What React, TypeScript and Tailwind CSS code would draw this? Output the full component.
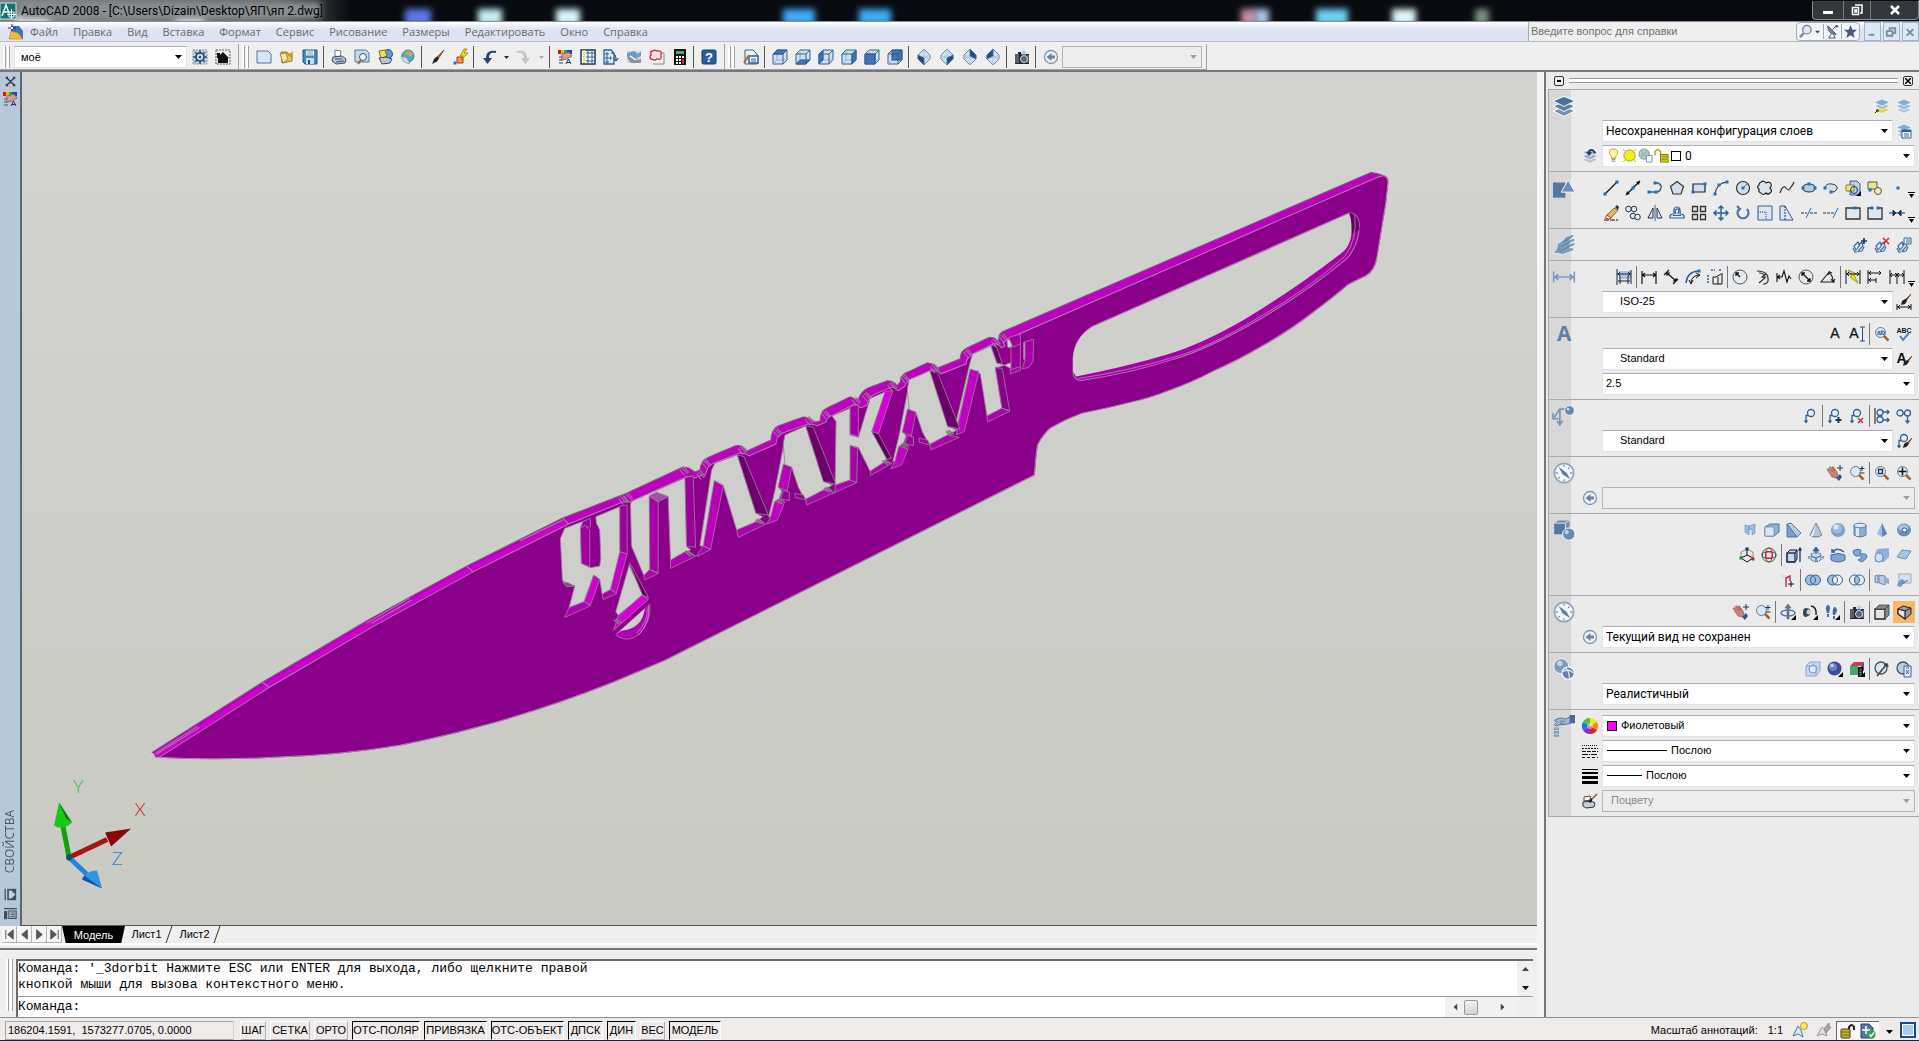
import React from "react";

// --- Types ---
interface ComboProps {
  label: string;
  value: string;
  className?: string;
  font?: string;
  disabled?: boolean;
  prefix?: React.ReactNode;
}

const ui = "font-['Open_Sans',sans-serif]";
const roboto = "font-['Roboto',sans-serif]";
const arial = "font-['Liberation_Sans',sans-serif]";

const N = "#17375e";
const B = "#2f6098";
const L = "#cfe0f1";
const K = "#111";

// --- Icons, all drawn on a 16x16 grid ---
const sq = (x: number, y: number, c = "#1f6fc0") => (
  <rect x={x - 1.5} y={y - 1.5} width="3" height="3" fill={c} />
);

const cubeFaces: Record<string, string> = {
  top: "1,5 5,1 15,1 11,5",
  bottom: "1,15 5,11 15,11 11,15",
  left: "1,5 5,1 5,11 1,15",
  right: "11,5 15,1 15,11 11,15",
  front: "1,5 11,5 11,15 1,15",
  back: "5,1 15,1 15,11 5,11",
};

const cube = (face: string) => (
  <g stroke={B} strokeLinejoin="round">
    <path d="M1 5 5 1h10v10l-4 4H1z" fill={L} />
    <path d="M5 1v10h10M5 11l-4 4" fill="none" stroke="#8fb0d2" />
    <polygon points={cubeFaces[face]} fill="#3f75b3" />
    <path d="M1 5h10v10M11 5l4-4" fill="none" />
  </g>
);

const isoFaces: Record<string, string> = {
  sw: "2,6 8,9 8,16 2,10",
  se: "14,6 8,9 8,16 14,10",
  ne: "8,0 14,6 14,10 8,7",
  nw: "8,0 2,6 2,10 8,7",
};

const iso = (face: string) => (
  <g stroke="#4d6f99" strokeWidth=".8" strokeLinejoin="round">
    <path d="M8 0l6 6v4l-6 6-6-6V6z" fill={L} />
    <path d="M2 6l6 3 6-3M8 9v7M2 10l6-3 6 3M8 0v7" fill="none" stroke="#a5bfdb" />
    <polygon points={isoFaces[face]} fill="#1f4c7e" />
  </g>
);

const glass = (
  <>
    <path d="m9.500 9.500 5 5" stroke="#a5622a" strokeWidth="2.500" />
    <circle cx="6.500" cy="6.500" r="5" fill="#dbe9f5" stroke="#66788c" />
  </>
);

const hand = (
  <>
    <path d="M0 4.500l1-1 5 3-4-4 1.500-.7L8 6 5 2h1.500L10 7l1 3-2 3-4-1z" fill="#c98274" stroke="#8d4c41" strokeWidth=".6" />
    <path d="m9 13 4-4 2 3-3 4z" fill="#33578b" />
    <path d="M13 0v6M10 3h6" stroke={N} />
  </>
);

const brush = (
  <>
    <path d="M15 1 8 8l1.500 1.500z" fill="#b9733c" stroke="#5a3417" strokeWidth=".7" />
    <path d="M8 7.500 5 10l-2 5 5-2.500L10 9.500z" fill="#222" />
  </>
);

const miniBrush = (
  <>
    <path d="m16 5-5 5 1 1z" stroke="#7a4b24" fill="#b9733c" />
    <path d="m11 9-3 2-1 4 4-1.500 2-3z" fill="#222" />
  </>
);

const layers = (a: string, b: string, c: string) => (
  <g stroke="#fff" strokeWidth=".7">
    <path d="m8 8.500 8 3-8 4-8-4z" fill={c} />
    <path d="m8 5 8 3-8 4-8-4z" fill={b} />
    <path d="m8 1 8 3.300-8 4-8-4z" fill={a} />
  </g>
);

const balloon = (x = 8, y = 5) => (
  <g fill="none" stroke={B} strokeWidth="1.300">
    <circle cx={x} cy={y} r="3.500" fill="#e8f1fa" />
    <path d={`M${x - 2.5} ${y + 2.5}h-2.500v7M${x - 6.5} ${y + 7.5}l1.500 2 1.500-2`} />
  </g>
);

const camera = (
  <>
    <path d="M1 5h3V3h3v2h8v10H1z" fill="#23272d" />
    <path d="M2 5v9M4 5v9M14 6v8" stroke="#8b96a3" />
    <circle cx="10" cy="10" r="3.500" fill="#51677f" stroke="#d5dde6" />
    <path d="M10 1v6M7 4h6M8 2l4 4M12 2 8 6" stroke="#8fc3ee" strokeWidth=".8" />
  </>
);

const chain = (
  <g fill="none" stroke="#3a6da8" strokeWidth="1.200">
    <path d="M2 9l4-4 2 3-4 5zM6 8l4-3 1 4-5 5M1 11l2 4 7-1 2-4" />
  </g>
);

const palette = (
  <>
    <path d="M1 1h4v4H1z" fill="#e01010" />
    <path d="M4 1h3v4H4z" fill="#f0c000" />
    <path d="M7 1h3v4H7z" fill="#10c040" />
    <path d="M10 1h5v4h-5z" fill="#2040f0" />
    <path d="M5 5 12 3l3 4-5 3-6 1z" fill="#d79d91" stroke="#824338" strokeWidth=".7" />
    <path d="M2 8h4M2 11h4M2 14h4" stroke="#68809a" strokeWidth="1.500" />
    <path d="m9 15 2.500-5 2.500 5M10 13.500h3" stroke={N} fill="none" />
  </>
);

const rings = (l: string, m: string, r: string) => (
  <g stroke={B}>
    <circle cx="5.500" cy="8" r="5" fill={l} />
    <circle cx="10.500" cy="8" r="5" fill={r} />
    <path d="M8 3.700a5 5 0 0 1 0 8.600 5 5 0 0 1 0-8.600z" fill={m} />
  </g>
);

const corner = <path d="M16 11v5h-5z" fill="#000" />;
const compass = (
  <>
    <circle cx="8" cy="8" r="7" fill="#f3f6f9" stroke="#8fa5be" strokeWidth="1.300" />
    <path d="M8 2v1.500M8 12.500V14M2 8h1.500M12.500 8H14M4 12l1-1M11 5l1-1" stroke="#7890ab" />
    <path d="M4 3.500 10 8l2.500 4.500L7 9z" fill="#5f7fa3" />
  </>
);

const icons: Record<string, React.ReactNode> = {
  cad: (
    <>
      <path d="M0 0h16v16H0z" fill="#17706b" stroke="#cfe8e6" />
      <path d="M2 13 6 2l3 8M4 9h4" stroke="#dff" strokeWidth="1.500" fill="none" />
      <path d="M9 9h5v5H9zM11.500 6v10M7 11.500h9" stroke="#fff" fill="none" />
    </>
  ),
  drawing: (
    <>
      <path d="M3 2h8l4 5v8H3z" fill="#3f73b5" />
      <path d="m1 15 2-8 7 2 5 6z" fill="#f3bd35" stroke="#b1801a" strokeWidth=".6" />
      <path d="M4 0v7M0 4h8" stroke={N} />
      <path d="M3 3h2v2H3z" fill="#fff" />
    </>
  ),
  gear: (
    <>
      <path d="M1 1h14v14H1z" fill="#c6d2df" stroke="#7e93aa" strokeDasharray="2 1" />
      <circle cx="8" cy="8" r="4" fill="#e8eef4" stroke="#324f70" strokeWidth="2" />
      <path d="M8 1v3M8 12v3M1 8h3M12 8h3M3 3l2 2M11 11l2 2M13 3l-2 2M3 13l2-2" stroke="#324f70" strokeWidth="1.500" />
      <circle cx="8" cy="8" r="1.500" fill="#324f70" />
    </>
  ),
  home: (
    <>
      <path d="M1 1h14v14H1z" fill="none" stroke="#555" strokeDasharray="2 1" />
      <path d="m8 3 6 6h-1v5H3V9H2V4h3v2z" fill="#111" />
    </>
  ),
  new: <path d="M1 2h11l3 3v9H1z" fill="#d5e6f5" stroke="#50779f" />,
  open: (
    <>
      <path d="M2 3h6l1 2h4v7L3 14z" fill="#e5c860" stroke="#8f7420" />
      <path d="m1 5 6-1 2 6-5 4z" fill="#f7e7a6" stroke="#8f7420" strokeWidth=".8" />
      <path d="m7 8 7-6-1 7-3-2z" fill="#c09b30" />
    </>
  ),
  save: (
    <>
      <path d="M1 1h14v14H3l-2-2z" fill="#4d83bf" stroke="#244f80" />
      <path d="M4 1.500h8v5H4z" fill="#e6f0fa" />
      <path d="M4 9h8v6H4z" fill="#c7dcf0" />
      <path d="M5 3h6M5 5h6" stroke="#7fa5cc" />
      <path d="M6 11h2v4H6z" fill="#244f80" />
    </>
  ),
  print: (
    <>
      <path d="m4 1 6 1-1 6-5-1z" fill="#fff" stroke="#4a6079" strokeWidth=".8" />
      <path d="m2 8 9-1 4 3-1 4-9 1-4-3z" fill="#b9c6d6" stroke="#34496a" />
      <path d="m4 10 7 0M5 13l8-1" stroke="#34496a" />
    </>
  ),
  preview: (
    <>
      <path d="M1 1h11l3 3v9H1z" fill="#c5dbf0" stroke="#50779f" />
      <circle cx="9" cy="8" r="3.500" fill="#f3f8fc" stroke="#3b5877" />
      <path d="m7 11-3 4" stroke="#a5622a" strokeWidth="2" />
    </>
  ),
  publish: (
    <>
      <circle cx="11" cy="5" r="4.500" fill="#5f97cf" stroke="#2b5585" />
      <path d="m2 2 6-1 2 6-6 3z" fill="#f5dc55" stroke="#806a14" />
      <path d="m2 9 7-1 6 2-2 4-8 1z" fill="#b9c6d6" stroke="#34496a" />
    </>
  ),
  web: (
    <>
      <circle cx="8" cy="7" r="6" fill="#58a2dd" stroke="#3573a8" />
      <path d="m8 1 6 4-5 3z" fill="#e8a14a" />
      <path d="m3 4 5-3v6z" fill="#7cc25b" />
      <path d="m1 7 6 2 3 6-6-2z" fill="#d8dde3" stroke="#77818d" strokeWidth=".6" />
    </>
  ),
  brush,
  match: (
    <>
      <path d="M5 8h6v6H5z" fill="#f19a5a" stroke="#a13d12" />
      <path d="m12 0-4 7h3l-2 4 7-7h-4l3-4z" fill="#ffd800" stroke="#8a6c00" strokeWidth=".7" />
      {sq(3, 14)}
    </>
  ),
  undo: <path d="M15 2C9 1 5 3 5 9H2l4.500 6L11 9H8c0-4 2-6 7-5z" fill="#23467c" />,
  redo: <path d="M1 2c6-1 10 1 10 7h3l-4.500 6L5 9h3c0-4-2-6-7-5z" fill="#c3c3c3" />,
  palette,
  design: (
    <>
      <path d="M1 1h14v14H1z" fill="#fff" stroke={N} strokeWidth="1.500" />
      <path d="M4 1v14" stroke="#e2c000" strokeWidth="2" strokeDasharray="1 1" />
      <path d="M7 3h2v2H7zM11 3h2v2h-2zM7 7h2v2H7zM11 7h2v2h-2zM7 11h2v2H7zM11 11h2v2h-2z" fill="none" stroke={B} />
    </>
  ),
  tools: (
    <>
      <path d="M1 1h7l3 3v11H1z" fill="#dce8f4" stroke={B} strokeWidth="1.300" />
      <path d="M3 4h2v2H3zM3 8h2v2H3zM3 12h2v2H3zM7 8h1v2H7z" fill="none" stroke={B} />
      <path d="M8 4c4 0 5 3 5 7m-2.500-2 2.500 3 2.500-3" stroke={N} fill="none" />
    </>
  ),
  sheet: (
    <>
      <path d="M1 2h14v12H1z" fill="#c8d9e8" />
      <path d="m1 4 7-2 4 3 3-3v5l-6 3-8-2z" fill="#6f9cc0" />
      <path d="m1 9 5-3 6 5 3-1v4H5z" fill="#8a949c" />
      <path d="m4 7 6 4" stroke="#fff" strokeWidth="1.500" />
    </>
  ),
  markup: (
    <>
      <path d="M4 4h11v11H4" fill="#f2f2f2" stroke="#888" />
      <path d="M4 2c2-2 3 0 4 0s3-1 4 1-1 2 0 4-1 4-3 3-2 2-4 1-4 0-4-3 2-1 1-3 0-3 2-3z" fill="#fbe4e4" stroke="#d8232f" strokeWidth="1.300" />
    </>
  ),
  calc: (
    <>
      <path d="M2 0h12v16H2z" fill="#151515" />
      <path d="M4 2h8v3H4z" fill="#4fa57a" />
      <path d="M4 7h2v2H4zM7 7h2v2H7zM10 7h2v2h-2zM4 10h2v2H4zM7 10h2v2H7zM4 13h2v2H4zM7 13h2v2H7z" fill="#fff" />
      <path d="M10 10h2v5h-2z" fill="#e32020" />
    </>
  ),
  help: (
    <>
      <rect x="1" y="1" width="14" height="14" rx="1.500" fill="#2a5f97" stroke="#173b66" />
      <text x="8" y="13" fontSize="13" fontWeight="700" fill="#fff" textAnchor="middle" fontFamily="Liberation Sans">?</text>
    </>
  ),
  views: (
    <>
      <path d="M2 1h8l4 4v10H2z" fill="#e8f0f8" stroke={B} />
      <path d="M6 7h9v7H6z" fill="#fff" stroke={B} strokeWidth="1.500" />
      <path d="M8 10h5M8 12h5" stroke={B} />
      <path d="m1 14 5-8" stroke="#b16b34" strokeWidth="2" />
    </>
  ),
  top: cube("top"),
  bottom: cube("bottom"),
  left: cube("left"),
  right: cube("right"),
  front: cube("front"),
  back: cube("back"),
  sw: iso("sw"),
  se: iso("se"),
  ne: iso("ne"),
  nw: iso("nw"),
  camera,
  prev: (
    <>
      <circle cx="8" cy="8" r="6.500" fill="#eef2f6" stroke="#7e93ac" strokeWidth="1.300" />
      <path d="m3.500 8 5-4v2.500h3.500v3H8.500V12z" fill="#6b84a2" />
    </>
  ),
  search: (
    <>
      <path d="m6 10-4 4" stroke="#7785a0" strokeWidth="2.500" />
      <circle cx="9.500" cy="6" r="4.500" fill="#dfe6f2" stroke="#6d7c98" strokeWidth="1.300" />
    </>
  ),
  comms: (
    <>
      <path d="M3 2c0 6 3 9 9 9z" fill="#7785a0" stroke="#46556f" />
      <path d="m8 6 4-4M7 10l-3 5h7l-2-4" stroke="#46556f" fill="none" />
      <circle cx="12.500" cy="2.500" r="1.500" fill="#46556f" />
    </>
  ),
  star: <path d="m8 1 2 5h5l-4 3.500 1.500 5.500L8 12l-4.500 3L5 9.500 1 6h5z" fill="#46597f" />,
  // panel headings
  hLayers: layers("#4d709b", "#5d7fa8", "#7391b5"),
  hDraw: (
    <>
      <path d="M0 4h9v11H0z" fill="#5578a3" />
      <path d="m11 2 5 9H6z" fill="#6c8fb9" stroke="#fff" strokeWidth=".7" />
    </>
  ),
  hChain: (
    <g fill="#7d9cbe" stroke="#fff" strokeWidth=".5">
      <path d="m0 14 3-4 0-3 4-2 2-3 6-2v2l-3 2 4-1v2l-4 2 4-1v2l-4 2 3 0v2l-8 3-4-1z" />
      <path d="m6 6 7-3M6 9l6-3M6 12l6-3M3 10l3 3" stroke="#4d6f97" />
    </g>
  ),
  hDim: <path d="M.5 4v8M15.500 4v8M1 8h14M4 6 1.500 8 4 10M12 6l2.500 2-2.500 2" stroke="#7d9cc2" strokeWidth="1.200" fill="none" />,
  hText: <text x="8" y="13" fontSize="15" fontWeight="700" fill="#5b7faa" textAnchor="middle" fontFamily="Open Sans">A</text>,
  hLeader: (
    <>
      <path d="M1 9 5 3h5M5 3v11M3 11.500l2 3 2-3M0 6v4h4" stroke="#7794b6" strokeWidth="1.200" fill="none" />
      <circle cx="12" cy="4" r="3.500" fill="#6586af" stroke="#fff" strokeWidth=".6" />
      <circle cx="11" cy="3" r="1" fill="#c9d8e8" />
    </>
  ),
  compass,
  hSolid: (
    <>
      <path d="m1 3 3-2h8v7l-3 3H1z" fill="#6b8cb4" />
      <path d="M1 3h8v8H1z" fill="#54779f" />
      <path d="M1 3h8l3-2M9 3v5" stroke="#e3eaf2" strokeWidth=".7" fill="none" />
      <circle cx="11.500" cy="11" r="4.500" fill="#6a8bb3" stroke="#fff" strokeWidth=".7" />
      <circle cx="10" cy="9.500" r="1.500" fill="#c4d3e4" />
    </>
  ),
  hVisual: (
    <>
      <circle cx="6" cy="6" r="5.500" fill="#7f9cbf" stroke="#fff" strokeWidth=".6" />
      <circle cx="5" cy="4" r="2" fill="#c4d3e4" />
      <circle cx="11" cy="11" r="4.500" fill="#5f81aa" stroke="#fff" strokeWidth=".8" />
      <path d="M7 10q4-3 8 1M9 7q3 3 3 8" stroke="#dbe5ef" fill="none" />
    </>
  ),
  hHand: (
    <>
      <path d="M1 4q4-3 8-1l4-2v5l-5 1H5L2 8 1 7l2-2z" fill="#a3b8cf" stroke="#56749a" strokeWidth=".7" />
      <path d="M5 4.500h4M5 6l3 0" stroke="#56749a" strokeWidth=".6" />
      <path d="M12 0h4v6l-4 0z" fill="#4b6a93" />
      <path d="M1 9.500h3v1H1zM1 12h3v1H1zM1 14.500h3v1H1z" fill="none" stroke="#7d96b2" strokeWidth=".8" />
    </>
  ),
  // layers
  layerPrev: (
    <>
      {layers("#8badd4", "#a3bedd", "#e8d21c")}
      <path d="m1 15 3-3M2 12h2v2" stroke={K} fill="none" />
    </>
  ),
  layerStates: layers("#8badd4", "#9db9d8", "#aec6e0"),
  layerMgr: (
    <>
      {layers("#8badd4", "#9db9d8", "#aec6e0")}
      <path d="M6 7h9v8H6z" fill="#fff" stroke={B} />
      <path d="M6 7h9v2H6z" fill={B} />
      <path d="M8 11h5M8 13h5" stroke={B} />
    </>
  ),
  layerBack: (
    <>
      {layers("#aab8c8", "#9fb0c4", "#b4c1d0")}
      <path d="M14 5C12 0 7 0 6 4H4l3 4 3-4H8c1-2 3-2 4 2z" fill="#1f3f70" />
    </>
  ),
  bulb: (
    <>
      <path d="M8 1c-6 0-5 6-2 8v2h4V9c3-2 4-8-2-8z" fill="#fdf6a8" stroke="#b59e18" />
      <path d="M6 12h4M6 14h4" stroke="#777" />
    </>
  ),
  sun: (
    <>
      <path d="M1 1l3 3M15 1l-3 3M1 15l3-3M15 15l-3-3" stroke="#c9b500" />
      <circle cx="8" cy="8" r="6" fill="#f4ec1c" stroke="#a59a10" />
    </>
  ),
  vpFreeze: (
    <>
      <circle cx="6.500" cy="6.500" r="5.500" fill="#b4c9c0" stroke="#7e94a5" />
      <path d="M3 3l7 7M10 3l-7 7" stroke="#90a8b0" />
      <path d="M9 8h6v7H9z" fill="#fff" stroke="#6d95bf" />
    </>
  ),
  lock: (
    <>
      <path d="M1 8V4q3-5 6 0v4" stroke="#b8a916" strokeWidth="1.600" fill="none" />
      <rect x="7" y="7" width="8" height="8" fill="#d8cc12" stroke="#7e7604" />
      <path d="M8 9.500h6M8 12h6" stroke="#8e8510" />
    </>
  ),
  // draw
  line: (<><path d="M2 14 14 2" stroke={K} strokeWidth="1.300" />{sq(2, 14)}{sq(14, 2)}</>),
  xline: (<><path d="M1 15 15 1" stroke={K} strokeWidth="1.200" /><path d="M1 15l1-4 3 3zM15 1l-4 1 3 3z" fill={K} />{sq(8, 8)}</>),
  pline: (<><path d="M1 12h8M8 3h3q4 2 3 5-1 4-5 4" stroke={B} strokeWidth="1.400" fill="none" />{sq(2, 12)}{sq(9, 12)}{sq(8, 3)}</>),
  polygon: <path d="m8 1.500 6.500 5L12 14H4L1.500 6.500z" fill="#d4dfeb" stroke="#333" strokeWidth="1.200" />,
  rect: (<><path d="M2 4h12v8H2z" fill="#d4dfeb" stroke="#222" strokeWidth="1.200" />{sq(2, 12)}{sq(14, 4)}</>),
  arc: (<><path d="M2 15Q3 3 14 2" stroke={K} fill="none" />{sq(2, 14)}{sq(6, 5)}{sq(14, 2)}</>),
  circle: (<><circle cx="8" cy="8" r="6.500" fill="#d4e0ec" stroke="#333" strokeWidth="1.200" /><path d="m8 8 4-4" stroke={B} />{sq(8, 8)}</>),
  cloud: <path d="M4 2q3-2 5 1 4-2 5 1 1 2-1 4 3 3 0 5-2 2-4 0-3 3-5 0-3-1-2-4Q-1 7 2 5q0-2 2-3z" fill="#dbe5ef" stroke="#222" strokeWidth="1.200" />,
  spline: <path d="M1 13q3-9 6-5t5-1q2-2 3-5" stroke="#333" strokeWidth="1.200" fill="none" />,
  ellipse: (<><ellipse cx="8" cy="8" rx="6.500" ry="4" fill="#b3cce4" stroke="#222" />{sq(2, 8)}{sq(14, 8)}{sq(8, 4)}</>),
  earc: (<><path d="M2 8q1-5 7-4 6 1 5 5-2 4-6 3" fill="#d4e0ec" stroke="#333" />{sq(2, 8)}{sq(8, 12)}</>),
  insert: (<><path d="M5 1h7l3 3v11H5z" fill="#b8cfe6" stroke={B} /><path d="M1 5h8v6H1z" fill="#ede58c" stroke="#8b8118" /><circle cx="9" cy="10" r="3.500" fill="none" stroke={N} />{corner}</>),
  block: (<><path d="M1 2h9v7H1z" fill="#ede58c" stroke="#555" /><circle cx="11" cy="11" r="3.500" fill="#f3eeb4" stroke="#555" />{sq(3, 10)}</>),
  point: sq(9, 8),
  erase: (<><path d="M1 15h14" stroke={K} strokeDasharray="5 1" /><path d="m4 10 7-7 4 2-7 8z" fill="#e4b36c" stroke="#8b6a30" /><path d="m4 10 4 3-2 1-4-1z" fill="#fff" stroke="#c33" /><path d="m12 2 2-2 2 2-1 3z" fill="#333" /></>),
  copy: (<g fill="#dbe7f3" stroke="#333"><circle cx="3.500" cy="4" r="2.800" /><circle cx="9" cy="4" r="2.800" /><circle cx="8" cy="11" r="2.800" /><circle cx="12.500" cy="12" r="2.800" /></g>),
  mirror: (<><path d="M6 3v10H1zM10 3v10h5z" fill="#dbe7f3" stroke="#333" /><path d="M8 0v16" stroke="#1f6fc0" /></>),
  offset: <path d="M1 13q-1-4 4-4Q4 2 8 2t3 7q5 0 4 4zM4 10.500h8M7 9q-2-4 1-5t1 5" fill="#e3edf7" stroke={B} strokeWidth="1.200" />,
  array: <path d="M1.500 1.500h5v5h-5zM9.500 1.500h5v5h-5zM1.500 9.500h5v5h-5zM9.500 9.500h5v5h-5z" fill="#dfe6ee" stroke="#333" strokeWidth="1.300" />,
  move: <path d="M8 1v14M1 8h14M5.500 3.500 8 1l2.500 2.500M5.500 12.500 8 15l2.500-2.500M3.500 5.500 1 8l2.500 2.500M12.500 5.500 15 8l-2.500 2.500" stroke={B} strokeWidth="1.500" fill="none" />,
  rotate: <path d="M12 4a5.500 5.500 0 1 1-8 0M2 1l3 3-3 3" stroke="#4877ac" strokeWidth="2.200" fill="none" />,
  scale: (<><path d="M1 1h14v14H1z" fill="#dbe7f3" stroke={B} /><path d="M1 7h8v8" stroke="#333" fill="none" strokeDasharray="1 1" /></>),
  stretch: (<><path d="M1 1h5l8 14H1z" fill="#dbe7f3" stroke="#33578b" /><path d="M6 1v14" stroke="#333" strokeDasharray="2 1" /></>),
  trim: (<><path d="M0 8h6M9 8h7" stroke="#333" strokeDasharray="3 1" /><path d="m5 13 5-10" stroke="#1f6fc0" /></>),
  extend: (<><path d="M0 8h11" stroke="#333" strokeDasharray="3 1" /><path d="m10 13 5-10" stroke="#1f6fc0" /></>),
  brk: (<><path d="M1 3h14v11H1z" fill="#dfe8f1" stroke="#333" strokeWidth="1.300" />{sq(10, 3)}</>),
  break2: (<><path d="M5 3H1v11h14V3h-4" fill="#dfe8f1" stroke="#333" strokeWidth="1.300" />{sq(5, 3)}{sq(11, 3)}</>),
  join: <path d="M0 8h16M4 5l3 3-3 3zM12 5 9 8l3 3z" fill={N} stroke={N} />,
  chainAdd: (<>{chain}<path d="M12 1v6M9 4h6" stroke={N} strokeWidth="1.700" /></>),
  chainDel: (<>{chain}<path d="m9 1 6 6M15 1 9 7" stroke="#e02020" strokeWidth="1.500" /></>),
  chainMgr: (<>{chain}<path d="M8 1h7v6H8z" fill="#fff" stroke={B} /><path d="M10 3h4M10 5h4" stroke={B} /></>),
  // dimension
  dimQuick: (<><path d="M3 2h12v8H3z" fill="#a9c4e2" /><path d="M1 0v16M15 1v14M4 7v8M12 7v8M1 5h14M2 12h12M4 3 2 5l2 2M12 3l2 2-2 2" stroke="#123" fill="none" /></>),
  dimLin: <path d="M1 2v13M15 2v13M1 6h14M4 4 1.500 6 4 8M12 4l2.500 2L12 8" stroke={K} strokeWidth="1.200" fill="none" />,
  dimAl: <path d="M4 4l9 8M1 6l5-5M10 15l5-5M4 7V4h3M13 9v3h-3" stroke={K} strokeWidth="1.200" fill="none" />,
  dimArc: (<><path d="M1 14Q2 3 13 2" stroke={B} strokeWidth="1.500" fill="none" /><path d="M6 14Q6 7 14 6M4 11l2 4 2-4M11 4l4 2-4 3" stroke={K} fill="none" />{sq(14, 2)}</>),
  dimOrd: (<><path d="M6 15V8h3l5-3M6 15h9M11 8v7M15 4v11" stroke={K} fill="none" /><path d="M1 6v9M4 1h4M12 1h3" stroke={B} strokeDasharray="2 1" strokeWidth="1.500" /></>),
  dimRad: (<><circle cx="8" cy="8" r="7" fill="#e6ebf0" stroke="#555" /><path d="m8 8-4-4m0 3V4h3" stroke={K} strokeWidth="1.300" fill="none" /></>),
  dimJog: <path d="M3 2q12 0 11 10-1 3-5 3M5 4q6 0 6 5M12 5 8 8l3 1-6 5" stroke="#333" strokeWidth="1.200" fill="none" />,
  dimJLine: <path d="M1 4v9M1 8h5l2-6 3 11 2-6 2 3M4 6 1.500 8 4 10" stroke={K} strokeWidth="1.100" fill="none" />,
  dimDia: (<><circle cx="8" cy="8" r="7" fill="#e6ebf0" stroke="#555" /><path d="m3.500 3.500 9 9M4 7V4h3M12 9v3H9" stroke={K} strokeWidth="1.300" fill="none" /></>),
  dimAng: <path d="M10 2 1 13h14M9 4q4 2 4 9M8 6l1-3 3 1M11 10l2 3 2-3" stroke="#222" strokeWidth="1.100" fill="none" />,
  dimFast: (<><path d="M3 1l9 4-3 1 4 8-8-6 2-1z" fill="#efe01a" stroke="#857a00" strokeWidth=".7" /><path d="M1 1v14M15 1v14M1 5h14M4 3 2 5l2 2M12 3l2 2-2 2" stroke={K} fill="none" /></>),
  dimBase: <path d="M1 1v14M1 4h13M1 11h8M9 9v5M4 2 2 4l2 2M12 2l2 2-2 2M4 9l-2 2 2 2" stroke={K} fill="none" />,
  dimCont: <path d="M1 1v14M8 4v11M15 1v14M1 6h14M3 4 1 6l2 2M13 4l2 2-2 2M6 4l2 2-2 2M10 4 8 6l2 2" stroke={K} fill="none" />,
  dimStyle: (<><path d="M1 10v6M15 10v6M1 13h14M4 11l-2 2 2 2M12 11l2 2-2 2" stroke={K} fill="none" /><path d="m15 0-6 6 1 1z" stroke="#7a4b24" /><path d="m9 5-3 2-1 4 4-1 2-3z" fill="#222" /></>),
  // text
  mtext: <text x="8" y="12" fontSize="14" fill="#111" stroke="#111" strokeWidth=".3" textAnchor="middle" fontFamily="Liberation Sans">A</text>,
  text: (<><text x="5" y="12" fontSize="14" fill="#111" stroke="#111" strokeWidth=".3" textAnchor="middle" fontFamily="Liberation Sans">A</text><path d="M11 1h5M13.500 1v14M11 15h5" stroke="#1f4f8b" /></>),
  find: (<>{glass}<text x="7" y="9" fontSize="7" fontWeight="700" fill={B} textAnchor="middle" fontFamily="Liberation Sans">ab</text></>),
  spell: (<><text x="8" y="7" fontSize="7" fontWeight="700" fill="#111" textAnchor="middle" fontFamily="Liberation Sans">ABC</text><path d="m4 10 3 4 6-7" stroke="#4a86c4" strokeWidth="2" fill="none" /></>),
  textStyle: (<><text x="5.500" y="12" fontSize="14" fontWeight="700" fill="#111" textAnchor="middle" fontFamily="Liberation Sans">A</text>{miniBrush}</>),
  // leaders
  ldr: balloon(9, 5),
  ldrAdd: (<>{balloon(8, 5)}<path d="M11.500 9v6M8.500 12h6" stroke={N} strokeWidth="2" /></>),
  ldrDel: (<>{balloon(8, 5)}<path d="m9 10 5 5M14 10l-5 5" stroke="#e02020" strokeWidth="1.400" /></>),
  ldrAlign: (<><path d="M1 0v16" stroke={K} /><g fill="none" stroke={B} strokeWidth="1.300"><circle cx="6" cy="4.500" r="3" /><circle cx="6" cy="11.500" r="3" /><path d="M9 4h6M9 12h6M13 2l2 2-2 2M13 10l2 2-2 2" /></g></>),
  ldrCol: (<g fill="none" stroke={B} strokeWidth="1.300"><circle cx="4" cy="5" r="3" /><circle cx="11.500" cy="5" r="3" /><path d="M7 5h2M11.500 8v7M9.500 12.500l2 2.500 2-2.500" /></g>),
  ldrStyle: (<>{balloon(8, 5)}{miniBrush}</>),
  // navigation
  pan: hand,
  zoomRt: (<>{glass}<path d="M13 1v5M10.500 3.500h5M10.500 8h5" stroke={N} /></>),
  zoomWin: (<>{glass}<path d="M4.500 4.500h4v4h-4z" fill="none" stroke={N} strokeWidth="1.300" /></>),
  zoomExt: (<>{glass}<path d="M6.500 2.500v8M2.500 6.500h8" stroke={K} strokeWidth="1.500" /></>),
  // 3D making
  polysolid: <path d="m3 3 4 1v9l-4-3zM7 4l6-2v9l-3 2V7L7 8z" fill="#9dbfe4" stroke="#5f89b8" strokeWidth=".6" />,
  box: (<><path d="m1 5 5-3h9v8l-5 4H1z" fill="#8fb1d8" stroke="#55779f" /><path d="M1 5h9v9H1z" fill="#dbe7f3" stroke="#55779f" strokeWidth=".6" /></>),
  wedge: (<><path d="m1 2 4-1 10 10-4 4z" fill="#b4cbe4" stroke="#55779f" /><path d="M1 2v13h10z" fill="#7fa0c6" stroke="#55779f" /></>),
  cone: (<><path d="m8 1 6 12q-6 4-12 0z" fill="#b5c6d8" stroke="#6d8098" /><path d="m8 2-3 12H3z" fill="#f3f7fb" /></>),
  sphere: (<><circle cx="8" cy="8" r="7" fill="#7d9fca" /><circle cx="7" cy="6.500" r="5" fill="#a0bade" /><circle cx="6" cy="5" r="2.500" fill="#dce8f5" /></>),
  cylinder: (<><path d="M2 3v10q6 4 12 0V3z" fill="#8badd4" stroke="#5c7ca4" /><path d="M4 5v9h3V5z" fill="#dce8f5" /><ellipse cx="8" cy="3.500" rx="6" ry="2.300" fill="#dce8f5" stroke="#5c7ca4" /></>),
  pyramid: (<><path d="m8 1 5 11-5 3-5-3z" fill="#9dbce0" /><path d="m8 1 5 11-5 3z" fill="#5b87bb" /></>),
  torus: (<><ellipse cx="8" cy="8" rx="7" ry="6.500" fill="#6a8fbd" /><ellipse cx="7.500" cy="6" rx="5" ry="3.500" fill="#a8c3e3" /><ellipse cx="8.500" cy="8" rx="2.500" ry="2" fill="#eef3f8" stroke="#34588a" /></>),
  moveG: (<><path d="M8 2v6l-6 3 6 4 6-4-6-3" fill="none" stroke={K} /><path d="m2 11 0-6 6-3 6 3v6" fill="none" stroke="#666" strokeWidth=".7" />{sq(8, 2, N)}{sq(2, 11, "#198a32")}{sq(14, 12, "#d02020")}</>),
  rotG: (<g fill="none"><circle cx="8" cy="8" r="7" stroke="#16803a" /><ellipse cx="8" cy="8" rx="7" ry="3.500" stroke="#1f4f9b" /><ellipse cx="8" cy="8" rx="3.500" ry="7" stroke="#d02020" /><path d="M5 5h6v6H5z" stroke="#c22" /></g>),
  extrude: (<><path d="m1 6 3-3h7v9l-2 3H1z" fill="#c7d9ec" stroke={K} /><path d="M1 6h8v9H1zM9 6l2-3M14 15V1M12.500 3.500 14 1l1.500 2.500" fill="none" stroke={N} strokeWidth="1.300" /></>),
  press: (<><path d="m3 7 5-2 5 2v6l-5 2-5-2z" fill="#c7d9ec" stroke={N} strokeDasharray="1 1" /><path d="M8 0 5 4h6zM8 3v4" fill={B} stroke={B} /><path d="M1 9v3M15 9v3M3 9l5 2 5-2M8 11v4" stroke={B} fill="none" /></>),
  revolve: (<><path d="M1 8q7-3 14 0v5q-7 4-14 0z" fill="#7da5d2" stroke="#3f6ea5" /><path d="M3 4q5-4 11 1M2 2v3h3" stroke="#33609a" strokeWidth="1.500" fill="none" /></>),
  sweep: <path d="M1 4q4-3 8-1l-1 4q6-1 7 2 0 3-5 6l-4-2q5-2 4-3-2-2-6-1-3-1-3-5z" fill="#84a9d4" stroke="#4772a6" />,
  loft: (<><path d="m3 2 12-1v9l-5 5H1V7z" fill="#8eb1db" /><ellipse cx="5" cy="10.500" rx="4" ry="4.500" fill="#cfe0f2" stroke="#5c85b6" /></>),
  planar: <path d="m6 3 9 1-5 8-9-2z" fill="#a9c4e4" stroke="#6d90b9" />,
  section: (<><path d="m1 2 9 3v4L1 6z" fill="#d5deea" /><path d="M6 15V6l4-2v5" stroke="#c2344a" strokeWidth="1.500" fill="none" /><path d="M11 9v6M8 12h6" stroke={K} /></>),
  union: rings("#9fc0da", "#9fc0da", "#9fc0da"),
  subtract: rings("#9fc0da", "#eee", "#eee"),
  intersect: rings("#eee", "#9fc0da", "#eee"),
  flatshot: (<><path d="m1 4 3-1v8l-3-1zM5 3l6 1v9l-6-2z" fill="#b7cce3" stroke="#6b8bb0" /><path d="m11 5 4 2v5l-4-1z" fill="#8facce" /></>),
  convert: (<><path d="M3 2h12v9H3z" fill="#d9e2ea" stroke="#9ab" /><path d="m2 10 4-3 3 2-4 6-4-1z" fill="#6d9bcd" /><path d="m6 12 6-4" stroke="#4b6f9a" /></>),
  orbit: (<><path d="M8 0 5 4h2v11h2V4h2z" fill="#777" stroke="#555" strokeWidth=".5" /><ellipse cx="8" cy="9" rx="7" ry="3" fill="none" stroke="#4a7cb5" strokeWidth="1.600" />{corner}</>),
  swivel: (<><path d="M1 9q0-5 3-5l4 1v6l-4 2q-3 0-3-4z" fill="#384350" /><circle cx="7" cy="8" r="2.500" fill="#c7d3de" /><path d="M9 2q6 1 5 9" stroke="#222" strokeWidth="1.500" fill="none" />{corner}</>),
  walk: (<><path d="M3 1q3 0 3 3L5 9H3Q1 4 3 1zM3 10h2v3H3zM10 3q3 0 3 4l-2 4H9Q8 6 10 3zM9 12h2v3H9z" fill="#3c6ea8" />{corner}</>),
  proj: (<><path d="M1 5h10v10H1z" fill="#e4e4e4" stroke="#222" strokeWidth="1.300" /><path d="m1 5 4-4h10l-4 4zM15 1v10l-4 4V5z" fill="#888" stroke="#333" strokeWidth=".7" /></>),
  persp: (<><path d="M2 5 7 2l8 2v6l-6 5-7-5z" fill="#9a9a9a" stroke="#222" /><path d="m2 5 7 2v8l-7-5z" fill="#e4e4e4" stroke="#222" strokeWidth="1.200" /><path d="m9 7 6-3" stroke="#222" /></>),
  // visual styles
  xray: (<><path d="m1 5 4-4h10v9l-4 5H1z" fill="#c5d6ee" stroke="#8aa6d4" /><circle cx="8" cy="8" r="4" fill="#e2ebf7" stroke="#6f90c6" /><path d="M11 5v10M1 5h10" stroke="#8aa6d4" /></>),
  shade: (<><circle cx="7.500" cy="7.500" r="7" fill="#3a4d94" /><circle cx="6" cy="6" r="4" fill="#6d80c4" /><circle cx="5" cy="4.500" r="1.800" fill="#c5cef0" />{corner}</>),
  faces: (<><path d="m1 5 4-4h10l-3 4z" fill="#c04248" /><path d="M1 5h8v9H1z" fill="#47a56c" /><path d="m12 5 3-4v8l-3 4z" fill="#394fa0" /><path d="M9 6h5v10H9z" fill="#111" /><path d="M10.500 7.500h2v2h-2z" fill="#f33" /><path d="M10.500 10.500h2v2h-2z" fill="#3c3" /><path d="M10.500 13.500h2v1.500h-2z" fill="#66f" />{corner}</>),
  vsEdit: (<><circle cx="7" cy="7" r="6" fill="#dbe7ef" stroke="#3f5468" strokeWidth="1.300" /><path d="m3 15 9-11M10 4l3-1 1 3" stroke="#444" strokeWidth="1.600" fill="none" /></>),
  vsMgr: (<><circle cx="7" cy="7" r="6" fill="#b9cfe0" stroke="#3f5468" strokeWidth="1.300" /><path d="M8 5h7v11H8z" fill="#e6f0fa" stroke={B} /><path d="m10 9 3 4M13 9l-3 4M10 7h3" stroke={B} /></>),
  // object properties
  wheel: (
    <>
      <path d="M8 8V0a8 8 0 0 1 7 4z" fill="#f7e01e" />
      <path d="M8 8l7-4a8 8 0 0 1 0 8z" fill="#f08a1c" />
      <path d="M8 8l7 4A8 8 0 0 1 8 16z" fill="#e02020" />
      <path d="M8 8v8a8 8 0 0 1-7-4z" fill="#8b2fd0" />
      <path d="M8 8l-7 4a8 8 0 0 1 0-8z" fill="#2b6fe0" />
      <path d="M8 8 1 4A8 8 0 0 1 8 0z" fill="#46c24a" />
      <circle cx="8" cy="8" r="3" fill="#fff" opacity=".4" />
    </>
  ),
  ltype: (
    <g stroke={K}>
      <path d="M0 2.500h16" strokeDasharray="1 1" />
      <path d="M0 5.500h16" strokeDasharray="2 1" />
      <path d="M0 8.500h16" strokeDasharray="4 1" />
      <path d="M0 11.500h16" strokeDasharray="6 1 1 1" />
      <path d="M0 14.500h16" strokeDasharray="3 2" />
    </g>
  ),
  lweight: <path d="M0 1h16v1H0zM0 4h16v2H0zM0 8h16v3H0zM0 13h16v3H0z" fill="#000" />,
  pstyle: (
    <>
      <path d="m2 4 6-1 1 4-7 1z" fill="#fff" stroke="#444" />
      <path d="m1 9 8-1 4 2-1 4-8 1-3-2z" fill="#c5d0dd" stroke="#333" />
      <path d="m15 1-6 6" stroke="#8a5528" strokeWidth="1.500" />
      <path d="m10 5-3 2 0 3 3-1z" fill="#222" />
    </>
  ),
  // palette foot
  autohide: (<><path d="M1.500 1v14" stroke="#3e4f63" strokeWidth="1.500" /><path d="M4 1h11v14H4z" fill="#3e4f63" /><path d="M6 3h3l5 5-5 5H6z" fill="#c6d4e2" /></>),
  props: (<><path d="M0 2h16M6 5h9v9H6z" stroke="#3e4f63" fill="none" strokeWidth="1.300" /><path d="M0 5h4v10H0z" fill="#3e4f63" /><path d="M8 7.500h6M8 9.500h6M8 11.500h6" stroke="#3e4f63" /></>),
  // status tray
  annoVis: (<><path d="m6 4-5 10 5-2 5 3-2-7z" fill="#d7e4f1" stroke="#4677ac" /><circle cx="12" cy="4" r="3.500" fill="#fbe36a" stroke="#c29a10" /></>),
  annoAuto: (<><path d="m6 5-5 9 5-2 5 2-2-6z" fill="#ddd" stroke="#999" /><path d="m8 7 5-6v4h2l-5 6z" fill="#aaa" stroke="#888" /></>),
  padlock: (<><path d="M9 7V4q3-4 5 0v3" stroke="#222" strokeWidth="2" fill="none" /><rect x="1" y="6" width="9" height="9" rx="1" fill="#c8b818" stroke="#333" /><path d="M2 9h7M2 12h7" stroke="#6d6200" /></>),
  sheetOk: (<><path d="M1 1h8l4 4v10H1z" fill="#54789a" stroke="#2b4762" /><path d="M6 3v8M2 7h8" stroke="#fff" strokeWidth="1.500" /><circle cx="11.500" cy="11.500" r="4" fill="#2fa84a" /><path d="m9.500 11.500 1.500 2 3-4" stroke="#fff" strokeWidth="1.300" fill="none" /></>),
  clean: (<><path d="M1 1h14v14H1z" fill="#fff" stroke="#1c4a82" strokeWidth="2" /><path d="M3 3h10v10H3z" fill="#a9cdf0" /></>),
  x: <path d="m3 3 10 10M13 3 3 13M3 5V3h2M13 5V3h-2M3 11v2h2M13 11v2h-2" stroke="#33404f" strokeWidth="1.800" fill="none" />,
};

const Ico: React.FC<{ n: string; className?: string }> = ({ n, className = "size-4" }) => (
  <svg viewBox="0 0 16 16" className={`shrink-0 overflow-visible ${className}`} aria-hidden="true">
    {icons[n]}
  </svg>
);

const Arrow: React.FC<{ className?: string }> = ({ className = "text-black" }) => (
  <svg viewBox="0 0 7 4" className={`h-1 w-[7px] shrink-0 ${className}`} aria-hidden="true">
    <path d="M0 0h7L3.500 4z" fill="currentColor" />
  </svg>
);

const Combo: React.FC<ComboProps> = ({ label, value, className = "", font = ui, disabled = false, prefix }) => (
  <div
    className={`flex h-[22px] min-w-0 items-center gap-1 border pr-1 pl-[3px] ${
      disabled ? "border-[#b4b4b4] bg-[#ededed]" : "border-[#e2e3ea] border-t-[#abadb3] bg-white"
    } ${className}`}
  >
    {prefix}
    <select
      aria-label={label}
      disabled={disabled}
      className={`min-w-0 flex-1 appearance-none bg-transparent outline-none ${font} ${
        disabled ? "text-[#8a8a8a]" : "text-black"
      }`}
    >
      <option>{value}</option>
    </select>
    <Arrow className={disabled ? "text-[#a0a0a0]" : "text-black"} />
  </div>
);

// --- Toolbars ---
const Grip = () => (
  <div className="flex w-[7px] shrink-0 justify-between self-stretch">
    <span className="w-[3px] border-r border-[#a0a0a0] bg-white" />
    <span className="w-[3px] border-r border-[#a0a0a0] bg-white" />
  </div>
);

// "|" is a separator, "v" a drop-down mark and "V" a disabled one
const Strip: React.FC<{ items: string }> = ({ items }) => (
  <>
    {items.split(" ").map((n, i) => {
      if (n === "|") return <span key={i} className="mr-[3px] ml-[2px] h-[22px] w-px shrink-0 bg-[#555]" />;
      if (n === "v" || n === "V")
        return (
          <button key={i} aria-label="Список" className="flex w-3 justify-center">
            <svg viewBox="0 0 5 3" className="h-[3px] w-[5px]">
              <path d="M0 0h5L2.500 3z" fill={n === "v" ? "#14235c" : "#aaa"} />
            </svg>
          </button>
        );
      return (
        <button key={i} aria-label={n} className="flex h-[22px] w-[23px] shrink-0 items-center justify-center">
          <Ico n={n} />
        </button>
      );
    })}
  </>
);

const Bar: React.FC<{ children: React.ReactNode }> = ({ children }) => (
  <div className="flex items-center border-r border-b border-[#a0a0a0] pt-[2px] pr-1 pb-px pl-[3px]">{children}</div>
);

// --- Title and menu ---
const glows = [
  { x: 418, w: 26, c: "#5a78e8" },
  { x: 490, w: 24, c: "#c4eef4" },
  { x: 568, w: 24, c: "#d8f6fc" },
  { x: 799, w: 32, c: "#3fa9f5" },
  { x: 875, w: 32, c: "#3fa9f5" },
  { x: 1249, w: 16, c: "#c98aa4" },
  { x: 1262, w: 14, c: "#a9c4ee" },
  { x: 1332, w: 32, c: "#6cd0f0" },
  { x: 1404, w: 24, c: "#dff6fa" },
  { x: 1482, w: 14, c: "#7b8f84" },
];

const TitleBar = () => (
  <header className="relative flex h-[22px] shrink-0 items-center overflow-hidden border-b border-[#8c9095] bg-[#070b10]">
    <svg className="absolute inset-0 h-full w-full" aria-hidden="true">
      <defs>
        <linearGradient id="haze">
          <stop offset="0" stopColor="#7d8183" />
          <stop offset=".8" stopColor="#5d6164" />
          <stop offset="1" stopColor="#070b10" />
        </linearGradient>
        <filter id="soft" x="-50%" y="-50%" width="200%" height="200%">
          <feGaussianBlur stdDeviation="3" />
        </filter>
      </defs>
      <rect width="350" height="22" fill="url(#haze)" />
      <ellipse cx="33" cy="20" rx="18" ry="7" fill="#e8ecee" filter="url(#soft)" />
      <ellipse cx="190" cy="20" rx="16" ry="7" fill="#d8dcde" filter="url(#soft)" />
      <rect x="21" y="2" width="300" height="17" fill="#8b8f91" filter="url(#soft)" />
      {glows.map((g) => (
        <rect key={g.x} x={g.x - g.w / 2} y="9" width={g.w} height="16" fill={g.c} filter="url(#soft)" />
      ))}
    </svg>
    <div className="relative flex w-full items-center gap-[5px]">
      <Ico n="cad" />
      <h1 className={`flex-1 text-[12px] leading-4 whitespace-pre text-black ${roboto}`}>
        {"AutoCAD 2008 - [C:\\Users\\Dizain\\Desktop\\ЯП\\яп 2.dwg]"}
      </h1>
      <div className="flex h-[19px] self-start rounded-b border border-t-0 border-[#8b8e92] bg-[#33373c]">
        <button aria-label="Свернуть" className="flex w-[30px] items-center justify-center">
          <svg viewBox="0 0 12 10" className="h-[10px] w-3"><path d="M1 6h10v3H1z" fill="#fff" /></svg>
        </button>
        <button aria-label="Восстановить" className="flex w-7 items-center justify-center border-x border-[#777a7e]">
          <svg viewBox="0 0 12 12" className="size-3">
            <path d="M4 1h7v8H9M1.500 3.500h6v7h-6zM4 6h1.500v2H4z" fill="none" stroke="#fff" strokeWidth="1.500" />
          </svg>
        </button>
        <button aria-label="Закрыть" className="flex w-[47px] items-center justify-center">
          <svg viewBox="0 0 12 10" className="h-[10px] w-3">
            <path d="m2 1 8 8M10 1 2 9" stroke="#fff" strokeWidth="2.500" />
          </svg>
        </button>
      </div>
    </div>
  </header>
);

const menu = ["Файл", "Правка", "Вид", "Вставка", "Формат", "Сервис", "Рисование", "Размеры", "Редактировать", "Окно", "Справка"];

const MenuBar = () => (
  <nav className="flex h-5 shrink-0 items-stretch border-b border-[#b6bccc] bg-gradient-to-b from-white via-[#dde3f2] via-40% to-[#dfe3f3]">
    <div className="flex flex-1 items-center pl-2">
      <Ico n="drawing" />
      <ul className={`flex gap-[15px] pl-[6px] text-[11px] leading-4 text-[#6b6b6b] ${ui}`}>
        {menu.map((m) => (
          <li key={m}>
            <button>{m}</button>
          </li>
        ))}
      </ul>
    </div>
    <input
      aria-label="Поиск в справке"
      placeholder="Введите вопрос для справки"
      className={`w-[268px] border-l border-[#a9a9a9] bg-[#efefef] px-[2px] text-[11px] placeholder:text-[#6f6f6f] ${arial}`}
    />
    <div className="flex w-16 items-center justify-between rounded border border-[#a5a9b3] bg-[#f4f5f9] px-px">
      <button aria-label="Найти"><Ico n="search" className="size-[15px]" /></button>
      <Arrow className="scale-75 text-[#444]" />
      <button aria-label="Центр связи" className="border-l border-[#a5a9b3] pl-px"><Ico n="comms" className="size-[15px]" /></button>
      <button aria-label="Избранное" className="border-l border-[#a5a9b3] pl-px"><Ico n="star" className="size-[15px]" /></button>
    </div>
    <div className="flex gap-[2px] pl-1">
      {["M4 11h6", "M3 7h6v5H3zM6 7V4h6v5H9", "m4 5 7 7M11 5l-7 7"].map((d, i) => (
        <button key={d} aria-label={["Свернуть окно", "Восстановить окно", "Закрыть окно"][i]} className="flex w-[17px] items-center justify-center border border-[#9fb4ca] bg-[#dce8f4]">
          <svg viewBox="0 0 16 16" className="size-4"><path d={d} stroke="#7d8ea2" strokeWidth="2" fill="none" /></svg>
        </button>
      ))}
    </div>
  </nav>
);

// --- Model drawn in the viewport ---
const belly =
  "L1383 176Q1388 178 1387 184L1385 203 1376 258Q1374 271 1365 276 1352 282 1347 285 1332 298 1313 312 1290 330 1260 347 1238 360 1213 371 1190 383 1167 391 1150 398 1127 403 1108 408 1082 413L1065 420 1050 428Q1043 434 1037 445 1035 460 1034 475L665 660 613 682Q545 709 477 727 440 737 400 745 340 755 273 757 215 760 160 757Z";
const back =
  "M153 752 263 682 370 619 467 566 563 518 617 497 625 494 683 467 689 468 695 472 700 470Q701 460 709 457L735 446Q742 444 747 451L771 440Q771 430 778 426L803 417Q809 417 815 422L820 421Q820 411 827 408L850 397 858 400Q861 391 868 388L887 381Q894 381 897 386L900 382Q900 375 908 372L927 363Q934 364 938 368L960 359Q960 351 967 348L988 338Q995 337 998 342L999 335 1002 332 1370 173 1376 174" +
  belly;
const front =
  "M160 757 270 687 376 625 473 572 569 524 623 502 630 502 686 477Q692 475 695 478L706 474Q707 466 714 463L740 453Q746 453 749 456L776 444Q776 437 783 433L808 424Q814 424 817 426L826 422Q827 418 833 415L855 404 861 408 867 405Q868 398 875 394L893 387 898 391 905 386Q906 381 914 378L932 370Q938 370 941 374L966 364Q966 358 973 354L993 344Q999 344 1001 348L1005 346 1003 343 1008 339 1376 178" +
  belly;

const letterA = {
  holes: [
    "730,430 735,405 797,378 852,545 878,555 850,570 797,598 790,590 775,562 755,502 730,492",
    "730,440 735,492 716,562 726,572 718,596 705,604 692,650 686,650 705,570",
  ],
  walls: [
    ["730,492 755,502 742,572 714,562", "#b800b8"],
    ["730,572 748,576 748,602 722,596", "#9a009a"],
    ["704,604 732,612 712,660 680,672 692,650", "#c400c4"],
    ["797,378 820,382 887,552 850,545", "#6a006a"],
    ["797,598 850,570 885,577 800,615", "#b000b0"],
    ["765,580 790,585 797,600 765,592", "#9a009a"],
  ],
};

const holes = [
  "62,715 75,685 130,664 122,684 125,790 152,803 180,798 183,775 180,690 170,670 168,650 240,620 242,755 213,870 187,882 180,838 162,825 133,905 88,922 105,858 78,850 68,840",
  "272,610 278,603 437,533 440,740 452,748 440,757 392,782 385,590 350,577 330,588 330,808 312,826 275,738",
  "515,510 525,490 592,465 648,640 668,650 645,668 590,690 550,557 525,542 492,738 480,738",
  "876,348 930,325 930,405 955,412 990,296 1037,275 995,395 1042,475 1030,488 990,514 955,443 932,437 930,540 885,555 888,365",
  "1290,185 1297,163 1352,138 1370,190 1392,196 1365,205 1385,325 1340,348 1320,222 1290,208 1250,382 1244,382",
  "268,795 310,885 235,945 228,935",
  "1400,122 1420,114 1418,145 1402,142",
  "1392,196 1412,188 1412,206",
  "1450,128 1454,126 1454,178 1450,178",
];

const walls: string[][] = [
  ["130,664 152,655 152,680 122,684", "#a000a0"],
  ["122,684 135,676 150,690 150,800 125,790", "#a300a3"],
  ["240,618 262,615 262,762 240,755", "#9c009c"],
  ["240,755 262,762 230,878 212,868", "#c800c8"],
  ["187,882 212,868 232,880 190,898", "#b000b0"],
  ["162,825 180,838 152,915 133,905", "#d000d0"],
  ["88,922 133,905 152,917 75,952", "#b000b0"],
  ["68,845 85,848 105,858 80,860", "#8a508a"],
  ["435,533 460,528 467,742 440,738", "#9a009a"],
  ["392,780 440,752 468,768 392,805", "#b000b0"],
  ["328,588 355,605 355,818 330,808", "#a800a8"],
  ["328,588 350,577 385,590 355,605", "#a550a5"],
  ["312,826 330,808 355,820 315,840", "#b000b0"],
  ["523,542 550,557 512,748 490,738", "#b800b8"],
  ["470,768 490,738 512,748 475,768", "#b000b0"],
  ["592,465 612,470 685,645 648,640", "#6a006a"],
  ["590,690 648,665 678,672 595,712", "#b000b0"],
  ["930,320 955,315 955,410 930,402", "#a800a8"],
  ["930,437 952,445 950,547 930,542", "#a800a8"],
  ["885,556 930,540 950,548 885,577", "#b000b0"],
  ["1035,275 1058,272 1015,402 995,395", "#d800d8"],
  ["995,395 1015,402 1054,475 1040,478", "#5a005a"],
  ["990,514 1035,485 1056,490 992,526", "#b000b0"],
  ["1290,208 1316,215 1272,395 1248,405 1252,382", "#c000c0"],
  ["1365,203 1386,206 1408,332 1385,325", "#8a008a"],
  ["1352,138 1368,138 1386,192 1370,190", "#6a006a"],
  ["1340,348 1385,325 1408,335 1342,366", "#b000b0"],
  ["1412,140 1440,130 1440,210 1412,210", "#9a009a"],
  ["1405,113 1440,103 1440,132 1418,142", "#a000a0"],
  ["1410,210 1440,200 1440,212 1410,222", "#b000b0"],
  ["1454,126 1480,118 1478,185 1465,203 1446,207 1454,180", "#a800a8"],
  ["268,788 276,798 326,892 308,885", "#6a006a"],
  ["235,948 306,885 326,897 222,990", "#d800d8"],
];

const Poly: React.FC<{ p: string; fill: string }> = ({ p, fill }) => (
  <polygon points={p} fill={fill} stroke="#9a7f9a" strokeWidth="2.500" strokeLinejoin="round" />
);

const Model = () => (
  <svg viewBox="23 72 1513 853" preserveAspectRatio="xMinYMid slice" className="h-full w-full" role="img" aria-label="Модель">
    <path d={back} fill="#bd00bd" stroke="#7d5a7d" strokeWidth="1" />
    <path d="M153 752 263 682 370 619 467 566 563 518" fill="none" stroke="#d000d0" strokeWidth="4" transform="translate(3 4)" />
    <path d={front} fill="#8b008b" stroke="#a884a8" strokeWidth="1" />
    <path d="M157 754 200 727M156 753 198 726M367 623 410 598M372 623 412 600M520 541 563 520M263 682l7 5M467 566l7 6M563 518l6 6" stroke="#a884a8" fill="none" />

    <g transform="translate(540 300) scale(.333333)">
      {holes.map((p) => (
        <Poly key={p} p={p} fill="#cecfcb" />
      ))}
      {walls.map(([p, c]) => (
        <Poly key={p} p={p} fill={c} />
      ))}
      {[0, 1].map((i) => (
        <g key={i} transform={i ? "translate(372 -165)" : undefined}>
          {letterA.holes.map((p) => (
            <Poly key={p} p={p} fill="#cecfcb" />
          ))}
          {letterA.walls.map(([p, c]) => (
            <Poly key={p} p={p} fill={c} />
          ))}
        </g>
      ))}
      <path d="M330 912Q336 960 300 1000 270 1028 235 1010L228 1003Z" fill="#b000b0" stroke="#9a7f9a" strokeWidth="2.500" />
      <path d="M322 925Q325 965 290 1000M326 918Q332 965 296 1005" fill="none" stroke="#d9a0d9" strokeWidth="2" />
      <path d="M232 1000 315 925Q308 985 245 992Z" fill="#cecfcb" />
      {[
        [425, 503], [475, 515], [490, 480], [600, 440], [705, 388], [800, 352], [850, 335],
        [940, 293], [972, 280], [1048, 250], [1085, 225], [1175, 195], [1275, 150], [1358, 118],
        [1382, 105], [242, 590], [258, 582],
      ].map(([x, y]) => (
        <path key={x} d={`M${x} ${y}l18 18M${x + 6} ${y - 3}l16 18M${x - 5} ${y + 6}l14 18`} stroke="#a07aa0" strokeWidth="3" />
      ))}
      {[[230, 965], [445, 762], [655, 665], [860, 570], [1035, 488], [1225, 400], [720, 605], [1090, 438]].map(([x, y]) => (
        <path key={x} d={`M${x - 8} ${y - 6}l16 12M${x - 2} ${y - 9}l18 12`} stroke="#8f758f" strokeWidth="5" />
      ))}
    </g>

    {/* grip opening */}
    <g transform="translate(960 150) scale(.333333)">
      <path d="M395 530 1165 190Q1195 190 1196 230 1194 285 1160 325 1040 425 900 507 740 600 640 628 520 668 362 692 340 690 338 670V625Q342 565 395 530Z" fill="#a800a8" stroke="#a884a8" strokeWidth="3" />
      <path d="M1165 190Q1195 190 1196 240L1170 255Z" fill="#6a006a" />
      <path d="M1182 196Q1190 270 1152 320 1040 420 895 503 740 596 640 622 520 660 355 686" fill="none" stroke="#c9a0c9" strokeWidth="2" />
      <path d="M395 532 1165 192Q1174 210 1172 255 1166 295 1140 312 1000 420 850 510 720 585 620 614 500 650 347 680L338 665V625Q342 565 395 532Z" fill="#cfd0cc" />
    </g>

    {/* UCS tripod */}
    <path d="M70 857 108 839" stroke="#a81414" strokeWidth="5" />
    <path d="M132 828 106 832 112 846Z" fill="#8b0808" />
    <path d="M70 857 64 826" stroke="#12a012" strokeWidth="5" />
    <path d="M60 802 55 825Q63 831 73 822Z" fill="#18c818" />
    <path d="M67 818l6 4-13-20z" fill="#0e7a0e" />
    <path d="M70 857 88 874" stroke="#2088dc" strokeWidth="5" />
    <path d="M103 888 83 879Q88 870 98 870Z" fill="#2d94e6" />
    <path d="M103 888 83 879 85 875z" fill="#0f5a9a" />
    <circle cx="70" cy="857" r="3" fill="#14506e" />
    <g fontFamily="Lato" fontWeight="300" fontSize="18" textAnchor="middle">
      <text x="79" y="793" fill="#30c030">Y</text>
      <text x="141" y="816" fill="#d02020">X</text>
      <text x="118" y="865" fill="#2088dc">Z</text>
    </g>
  </svg>
);

// --- Dashboard on the right ---
const Row: React.FC<{ children: React.ReactNode }> = ({ children }) => (
  <div className="flex h-[25px] items-center justify-end">{children}</div>
);

const Tools: React.FC<{ items: string; more?: boolean }> = ({ items, more = false }) => (
  <Row>
    {items.split(" ").map((n, i) =>
      n === "|" ? (
        <span key={i} className="mx-px h-[22px] w-px bg-[#777]" />
      ) : (
        <button
          key={i}
          aria-label={n}
          className={`flex size-[22px] shrink-0 items-center justify-center ${n === "persp" ? "bg-[#f6b868]" : ""}`}
        >
          <Ico n={n} />
        </button>
      )
    )}
    {more && (
      <button aria-label="Ещё" className="flex w-[7px] self-end pb-[2px]">
        <svg viewBox="0 0 7 6" className="h-[6px] w-[7px]">
          <path d="M0 0h7v1H0zM1 2h5L3.500 6z" fill="#000" />
        </svg>
      </button>
    )}
  </Row>
);

const Field: React.FC<ComboProps & { lead?: string; tail?: string }> = ({ lead, tail, ...combo }) => (
  <Row>
    <span className="flex w-[31px] shrink-0 items-center pl-[11px]">{lead && <Ico n={lead} />}</span>
    <Combo {...combo} className="flex-1" />
    {tail && (
      <button aria-label={tail} className="flex w-[22px] shrink-0 items-center justify-center">
        <Ico n={tail} />
      </button>
    )}
  </Row>
);

const Section: React.FC<{ icon: string; children: React.ReactNode }> = ({ icon, children }) => (
  <section className="flex border-t border-l border-[#a9a9ad] bg-[#ebebeb]">
    <div className="w-[22px] shrink-0 bg-[#d8d8d8] pt-[5px] pl-1">
      <Ico n={icon} className="size-[22px]" />
    </div>
    <div className="min-w-0 flex-1 pt-[3px] pr-1 pb-[3px]">{children}</div>
  </section>
);

const big = `text-[12px] ${roboto}`;
const small = `text-[11px] ${arial}`;

const Dashboard = () => (
  <aside className="w-[375px] shrink-0 border-l-2 border-[#77777b] bg-[#ebebeb] pl-[2px]">
    <div className="flex h-[17px] items-center gap-[5px] pr-[6px] pl-[6px]">
      <button aria-label="Свернуть панель" className="flex size-[10px] items-center justify-center rounded-[2px] border border-[#333]">
        <span className="h-[2px] w-1 bg-black" />
      </button>
      <div className="h-[5px] flex-1 border-y border-[#9a9a9a] bg-white" />
      <button aria-label="Закрыть панель" className="flex size-[10px] items-center justify-center rounded-[2px] border border-[#333]">
        <svg viewBox="0 0 6 6" className="size-[6px]"><path d="m0 0 6 6M6 0 0 6" stroke="#000" strokeWidth="1.500" /></svg>
      </button>
    </div>
    <div className="border-b border-[#a9a9ad]">
      <Section icon="hLayers">
        <Tools items="layerPrev layerStates" />
        <Field label="Конфигурация слоев" value="Несохраненная конфигурация слоев" font={big} tail="layerMgr" />
        <Field
          label="Слой"
          value="0"
          font={big}
          lead="layerBack"
          prefix={
            <span className="flex items-center gap-px">
              <Ico n="bulb" className="size-[15px]" />
              <Ico n="sun" className="size-[15px]" />
              <Ico n="vpFreeze" className="size-[15px]" />
              <Ico n="lock" className="size-[15px]" />
              <span className="ml-px size-[10px] border border-black bg-white" />
            </span>
          }
        />
      </Section>
      <Section icon="hDraw">
        <Tools items="line xline pline polygon rect arc circle cloud spline ellipse earc insert block point" more />
        <Tools items="erase copy mirror offset array move rotate scale stretch trim extend brk break2 join" more />
      </Section>
      <Section icon="hChain">
        <Tools items="chainAdd chainDel chainMgr" />
      </Section>
      <Section icon="hDim">
        <Tools items="dimQuick | dimLin dimAl dimArc dimOrd | dimRad dimJog dimJLine dimDia dimAng | dimFast dimBase dimCont" more />
        <Field label="Размерный стиль" value="ISO-25" font={small} prefix={<span className="w-[10px]" />} tail="dimStyle" />
      </Section>
      <Section icon="hText">
        <Tools items="mtext text | find spell" />
        <Field label="Текстовый стиль" value="Standard" font={small} prefix={<span className="w-[10px]" />} tail="textStyle" />
        <Field label="Высота текста" value="2.5" font={small} />
      </Section>
      <Section icon="hLeader">
        <Tools items="ldr | ldrAdd ldrDel | ldrAlign ldrCol" />
        <Field label="Стиль выноски" value="Standard" font={small} prefix={<span className="w-[10px]" />} tail="ldrStyle" />
      </Section>
      <Section icon="compass">
        <Tools items="pan zoomRt | zoomWin zoomExt" />
        <Field label="Вид" value="" disabled lead="prev" />
      </Section>
      <Section icon="hSolid">
        <Tools items="polysolid box wedge cone sphere cylinder pyramid torus" />
        <Tools items="moveG rotG | extrude press revolve sweep loft planar" />
        <Tools items="section | union subtract intersect | flatshot convert" />
      </Section>
      <Section icon="compass">
        <Tools items="pan zoomRt | orbit swivel walk | camera | proj persp" />
        <Field label="Текущий вид" value="Текущий вид не сохранен" font={big} lead="prev" />
      </Section>
      <Section icon="hVisual">
        <Tools items="xray shade faces | vsEdit vsMgr" />
        <Field label="Визуальный стиль" value="Реалистичный" font={big} />
      </Section>
      <Section icon="hHand">
        <Field label="Цвет" value="Фиолетовый" font={small} lead="wheel" prefix={<span className="ml-px size-[10px] border border-black bg-[#ff00ff]" />} />
        <Field label="Тип линий" value="Послою" font={small} lead="ltype" prefix={<span className="ml-px h-px w-[60px] bg-black" />} />
        <Field label="Вес линий" value="Послою" font={small} lead="lweight" prefix={<span className="ml-px h-px w-[35px] bg-black" />} />
        <Field label="Стиль печати" value="Поцвету" font={small} lead="pstyle" disabled prefix={<span className="w-px" />} />
      </Section>
    </div>
  </aside>
);

// --- Bottom of the drawing window ---
const LayoutTabs = () => (
  <div className="flex h-[19px] shrink-0 border-b-2 border-white bg-[#efefef]">
    <div className="flex pl-[2px]">
      {["M3 2v10M11 2v10L5 7z", "M10 2v10L4 7z", "M4 2v10l6-5z", "M3 2v10l6-5zM11 2v10"].map((d, i) => (
        <button key={d} aria-label={["Первый лист", "Предыдущий лист", "Следующий лист", "Последний лист"][i]} className="flex w-[15px] items-center justify-center border-r border-b border-[#b5b5b5] bg-[#f6f6f6]">
          <svg viewBox="0 0 14 14" className="size-[13px]"><path d={d} fill="#555" stroke="#555" /></svg>
        </button>
      ))}
    </div>
    <div role="tablist" className={`flex text-[11px] leading-4 ${arial}`}>
      <button role="tab" aria-selected="true" className="w-[63px] bg-black text-white [clip-path:polygon(0_0,100%_0,94%_100%,6%_100%)]">
        Модель
      </button>
      {["Лист1", "Лист2"].map((t) => (
        <button key={t} role="tab" aria-selected="false" className="flex items-stretch pl-[3px] text-black">
          <span className="w-[37px]">{t}</span>
          <svg viewBox="0 0 8 17" className="h-[17px] w-2"><path d="M7 0 1 17" stroke="#333" /></svg>
        </button>
      ))}
    </div>
  </div>
);

const scrollBtn = "flex items-center justify-center text-[#444]";

const CommandLine = () => (
  <div className="flex shrink-0 border-t-2 border-[#777] bg-[#efefef] pr-1 pl-[6px]">
    <div className="flex pt-[9px] pb-[6px]">
      <Grip />
    </div>
    <div className="mt-[9px] ml-[3px] min-w-0 flex-1 border-t-2 border-l-2 border-[#6b6b6b] font-['Liberation_Mono',monospace] text-[13px] leading-4 text-black">
      <div className="flex border-b border-[#9a9a9a] bg-white">
        <output className="flex-1 pb-[3px]">
          <p>Команда: &apos;_3dorbit Нажмите ESC или ENTER для выхода, либо щелкните правой</p>
          <p>кнопкой мыши для вызова контекстного меню.</p>
        </output>
        <div className="flex w-4 flex-col justify-between bg-[#f1f1f1] py-[6px]">
          <button aria-label="Вверх" className={scrollBtn}><Arrow className="rotate-180" /></button>
          <button aria-label="Вниз" className={scrollBtn}><Arrow /></button>
        </div>
      </div>
      <div className="flex h-5 items-center bg-white">
        <label htmlFor="cmd">Команда:</label>
        <input id="cmd" className="min-w-0 flex-1 pl-1 outline-none" />
        <div className="flex h-full w-[70px] items-center gap-[9px] bg-[#f1f1f1] pl-[7px]">
          <button aria-label="Влево" className={scrollBtn}><Arrow className="rotate-90" /></button>
          <span className="-ml-1 h-[15px] w-[14px] rounded-[2px] border border-[#9a9a9a] bg-gradient-to-b from-[#f3f3f3] to-[#d2d2d2]" />
          <button aria-label="Вправо" className="ml-3 text-[#444]"><Arrow className="-rotate-90" /></button>
        </div>
        <span className="h-full w-[18px] bg-[#efefef]" />
      </div>
    </div>
  </div>
);

const modes = [
  { t: "ШАГ", on: false, w: "w-[26px]" },
  { t: "СЕТКА", on: false, w: "w-[40px]" },
  { t: "ОРТО", on: false, w: "w-[34px]" },
  { t: "ОТС-ПОЛЯР", on: true, w: "w-[68px]" },
  { t: "ПРИВЯЗКА", on: true, w: "w-[63px]" },
  { t: "ОТС-ОБЪЕКТ", on: true, w: "w-[73px]" },
  { t: "ДПСК", on: true, w: "w-[35px]" },
  { t: "ДИН", on: true, w: "w-[29px]" },
  { t: "ВЕС", on: false, w: "w-[25px]" },
  { t: "МОДЕЛЬ", on: true, w: "w-[52px]" },
];

const StatusBar = () => (
  <footer className={`flex h-[24px] shrink-0 items-center border-t border-b border-t-[#8e8e8e] border-b-[#1d2430] bg-[#efebeb] pt-[2px] pr-[3px] pl-[5px] text-[11px] leading-4 text-black ${arial}`}>
    <p className="mr-[6px] h-[19px] w-[229px] border border-[#a7a3a3] border-r-[#d5d1d1] pl-[2px] whitespace-pre">
      186204.1591,  1573277.0705, 0.0000
    </p>
    <div className="flex gap-1">
      {modes.map((m) => (
        <button
          key={m.t}
          aria-pressed={m.on}
          className={`h-[19px] border whitespace-nowrap ${m.w} ${
            m.on ? "border-white border-t-black border-l-black" : "border-[#b3afaf] border-t-white border-l-white"
          }`}
        >
          <span className="-mx-1">{m.t}</span>
        </button>
      ))}
    </div>
    <div className="ml-auto flex items-center">
      <label htmlFor="scale">Масштаб аннотаций:</label>
      <button id="scale" className="pr-[9px] pl-[10px]">1:1</button>
      <button aria-label="Видимость аннотаций" className="pr-2"><Ico n="annoVis" /></button>
      <button aria-label="Автомасштаб" className="pr-1"><Ico n="annoAuto" /></button>
      <div className="flex gap-1 border-t border-l border-[#666] bg-[#f8f6f6] px-[3px] py-px">
        <button aria-label="Закрепление"><Ico n="padlock" /></button>
        <button aria-label="Стандарты"><Ico n="sheetOk" /></button>
      </div>
      <button aria-label="Меню строки состояния" className="px-[7px] pt-1"><Arrow /></button>
      <button aria-label="Очистить экран"><Ico n="clean" /></button>
    </div>
  </footer>
);

export default function App() {
  return (
    <div className="flex h-screen flex-col overflow-hidden bg-[#efefef]">
      <TitleBar />
      <MenuBar />
      <div className="flex shrink-0 border-b-2 border-[#777] pt-[2px]">
        <Bar>
          <Grip />
          <Combo label="Рабочее пространство" value="моё" font={`pl-[3px] text-[11px] ${arial}`} className="mr-px ml-1 w-[173px]" />
          <Strip items="gear home" />
        </Bar>
        <Bar>
          <Grip />
          <span className="w-[3px]" />
          <Strip items="new open save | print preview publish web | brush match | undo v redo V | palette design tools sheet markup calc | help" />
        </Bar>
        <Bar>
          <Grip />
          <span className="w-1" />
          <Strip items="views | top bottom left right front back | sw se ne nw | camera | prev" />
          <Combo label="Виды" value="" disabled className="w-[140px]" />
        </Bar>
      </div>
      <div className="flex min-h-0 flex-1">
        <div className="flex min-w-0 flex-1 flex-col border-r-[7px] border-[#f4f4f4]">
          <div className="flex min-h-0 flex-1">
            <div className="flex w-[22px] shrink-0 flex-col items-center border-r-2 border-[#5c6773] bg-[#b9c8d9] pt-[3px] pb-[6px]">
              <button aria-label="Закрыть палитру"><Ico n="x" className="size-[13px]" /></button>
              <button aria-label="Свойства объекта" className="mt-[3px]"><Ico n="palette" /></button>
              <h2 className={`mt-auto rotate-180 text-[12px] leading-4 text-[#4a5a6c] [writing-mode:vertical-rl] ${ui}`}>СВОЙСТВА</h2>
              <button aria-label="Автоскрытие" className="mt-[15px]"><Ico n="autohide" className="size-[13px]" /></button>
              <button aria-label="Параметры" className="mt-[6px]"><Ico n="props" className="size-[13px]" /></button>
            </div>
            <main className="min-w-0 flex-1 border-b border-[#555] bg-gradient-to-b from-[#d3d3d1] to-[#c9cac3]">
              <Model />
            </main>
          </div>
          <LayoutTabs />
          <div className="h-[3px] shrink-0" />
          <CommandLine />
        </div>
        <Dashboard />
      </div>
      <StatusBar />
    </div>
  );
}
